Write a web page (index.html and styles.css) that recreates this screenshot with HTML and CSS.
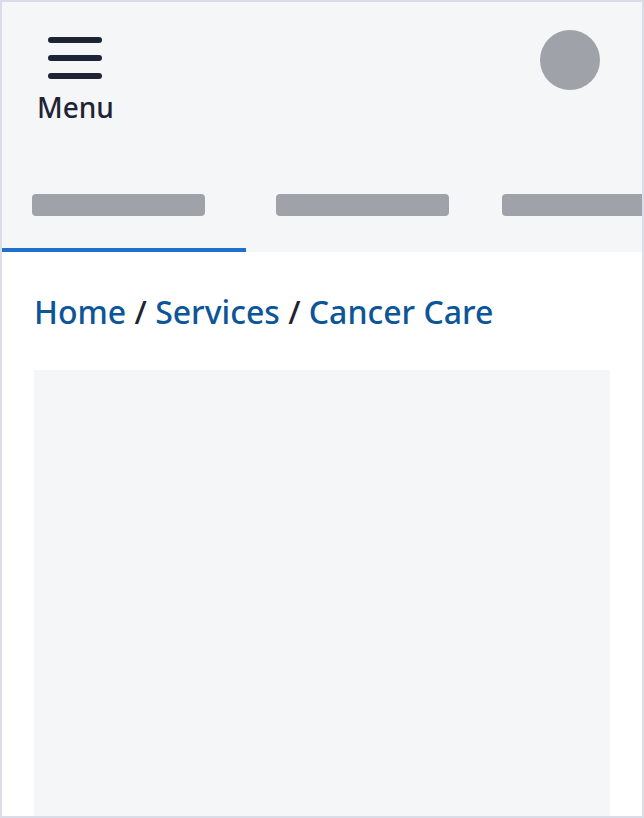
FILE: index.html
```html
<!DOCTYPE html>
<html lang="en">
<head>
<meta charset="utf-8">
<title>Cancer Care</title>
<link rel="stylesheet" href="styles.css">
</head>
<body>
<div class="frame">
  <header class="header">
    <div class="top-row">
      <button class="menu-btn" type="button">
        <svg class="burger" width="54" height="46" viewBox="0 0 54 46" aria-hidden="true">
          <line x1="3" y1="3" x2="51" y2="3"/>
          <line x1="3" y1="21" x2="51" y2="21"/>
          <line x1="3" y1="39" x2="51" y2="39"/>
        </svg>
        <span class="menu-label">Menu</span>
      </button>
      <div class="avatar"></div>
    </div>
    <nav class="tabs">
      <div class="tab tab-1 active"><span class="tab-bar"></span></div>
      <div class="tab tab-2"><span class="tab-bar"></span></div>
      <div class="tab tab-3"><span class="tab-bar"></span></div>
    </nav>
  </header>
  <main class="content">
    <nav class="breadcrumb">
      <a href="#">Home</a> <span class="sep">/</span> <a href="#">Services</a> <span class="sep">/</span> <a href="#">Cancer Care</a>
    </nav>
    <div class="placeholder"></div>
  </main>
</div>
</body>
</html>
```
FILE: styles.css
```css
* { box-sizing: border-box; }
html, body { margin: 0; padding: 0; background: #ffffff; }
body { font-family: "Noto Sans", "Open Sans", sans-serif; }

.frame {
  width: 644px;
  height: 818px;
  border: 2px solid #dadde7;
  overflow: hidden;
  background: #ffffff;
}

.header {
  background: #f5f6f8;
}

.top-row {
  display: flex;
  justify-content: space-between;
  align-items: flex-start;
  padding: 28px 42px 0 35px;
}

.menu-btn {
  display: flex;
  flex-direction: column;
  align-items: center;
  gap: 8px;
  margin-top: 7px;
  padding: 0;
  border: 0;
  background: none;
  font: inherit;
  cursor: pointer;
}

.burger line {
  stroke: #1f2434;
  stroke-width: 6;
  stroke-linecap: round;
}

.menu-label {
  font-size: 28px;
  font-weight: 500;
  line-height: 32px;
  color: #1f2434;
}

.avatar {
  width: 60px;
  height: 60px;
  border-radius: 50%;
  background: #a0a2aa;
}

.tabs {
  display: flex;
  margin-top: 39px;
}

.tab {
  flex: none;
  padding: 32px 0 32px 30px;
  border-bottom: 4px solid transparent;
}
.tab.active { border-bottom-color: #1e70d0; }
.tab-1 { width: 244px; }
.tab-2 { width: 226px; }

.tab-bar {
  display: block;
  width: 173px;
  height: 22px;
  border-radius: 4px;
  background: #a0a2aa;
}

.content {
  padding: 40px 32px 0;
}

.breadcrumb {
  font-size: 32px;
  font-weight: 500;
  line-height: 40px;
  color: #1f2434;
  white-space: nowrap;
}
.breadcrumb a {
  color: #0c5597;
  text-decoration: none;
}

.placeholder {
  margin-top: 38px;
  height: 600px;
  background: #f5f6f8;
}
```
